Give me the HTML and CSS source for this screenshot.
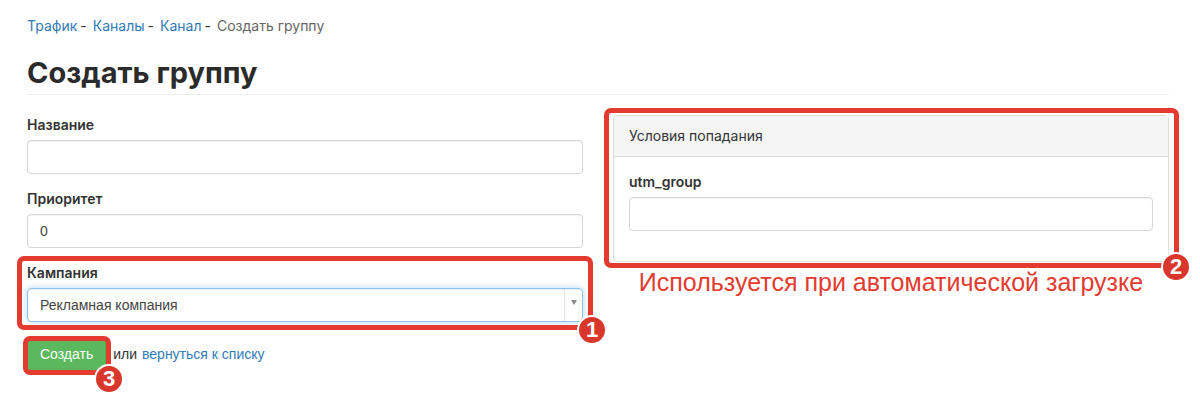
FILE: index.html
```html
<!DOCTYPE html>
<html lang="ru">
<head>
    <meta charset="UTF-8">
    <title>Создать группу</title>
    <link rel="stylesheet" href="styles.css">
</head>
<body>
    <div class="page">
        <div class="breadcrumb">
            <a href="#">Трафик</a><span class="sep">-</span><a href="#">Каналы</a><span class="sep">-</span><a href="#">Канал</a><span class="sep">-</span><span class="current">Создать группу</span>
        </div>

        <h1 class="page-header">Создать группу</h1>

        <div class="row">
            <!-- Left column: main fields -->
            <div class="col">
                <div class="form-group">
                    <label>Название</label>
                    <div class="form-control"></div>
                </div>
                <div class="form-group">
                    <label>Приоритет</label>
                    <div class="form-control">0</div>
                </div>
                <div class="form-group mark mark-1">
                    <label>Кампания</label>
                    <div class="form-control select">
                        <span class="select-value">Рекламная компания</span>
                        <span class="select-arrow"><span class="triangle"></span></span>
                    </div>
                    <span class="badge">1</span>
                </div>
                <div class="actions">
                    <span class="mark mark-3">
                        <button class="btn">Создать</button>
                        <span class="badge">3</span>
                    </span>
                    <span class="or">или</span>
                    <a href="#" class="back">вернуться к списку</a>
                </div>
            </div>

            <!-- Right column: conditions panel -->
            <div class="col">
                <div class="panel mark mark-2">
                    <div class="panel-heading">Условия попадания</div>
                    <div class="panel-body">
                        <div class="form-group">
                            <label>utm_group</label>
                            <div class="form-control"></div>
                        </div>
                    </div>
                    <span class="badge">2</span>
                    <div class="note">Используется при автоматической загрузке</div>
                </div>
            </div>
        </div>
    </div>
</body>
</html>
```

FILE: styles.css
```css
* {
    box-sizing: border-box;
}

html,
body {
    min-height: 100%;
}

body {
    margin: 0;
    font-family: Inter, "Noto Sans", sans-serif;
    font-size: 14px;
    color: #333;
    background: #fff;
}

a {
    color: #337ab7;
    text-decoration: none;
}

.page {
    min-height: 404px;
    padding: 16px 31px 0 27px;
}

/* Breadcrumb */
.breadcrumb {
    line-height: 20px;
    font-size: 14px;
}

.breadcrumb .sep {
    margin: 0 6px 0 3px;
    color: #333;
}

.breadcrumb .current {
    color: #666;
}

/* Title */
.page-header {
    margin: 19px 0 20px;
    padding-bottom: 3px;
    font-size: 29px;
    line-height: 36px;
    font-weight: 700;
    color: #2b2b2b;
    border-bottom: 1px solid #eee;
}

.row {
    display: grid;
    grid-template-columns: 1fr 1fr;
    gap: 30px;
}

/* Form */
.form-group {
    margin-bottom: 15px;
}

label {
    display: block;
    margin-bottom: 5px;
    line-height: 20px;
    font-weight: 600;
    color: #333;
}

.form-control {
    height: 34px;
    padding: 0 12px;
    border: 1px solid #d6d6d6;
    border-radius: 4px;
    box-shadow: inset 0 1px 1px rgba(0, 0, 0, 0.05);
    font-family: "Liberation Sans", Arial, sans-serif;
    font-size: 14px;
    line-height: 32px;
    color: #444;
}

.select {
    display: flex;
    padding-right: 0;
    border-color: #8fc2ec;
    box-shadow: inset 0 1px 1px rgba(0, 0, 0, 0.075), 0 0 6px rgba(102, 175, 233, 0.5);
}

.select-value {
    flex: 1;
}

.select-arrow {
    width: 18px;
    border-left: 1px solid #e4e4e4;
    display: flex;
    justify-content: center;
    padding-top: 11px;
}

.triangle {
    width: 0;
    height: 0;
    border-left: 3px solid transparent;
    border-right: 3px solid transparent;
    border-top: 5px solid #888;
}

/* Buttons */
.actions {
    display: flex;
    align-items: center;
    font-family: "Liberation Sans", Arial, sans-serif;
    font-size: 14px;
}

.btn {
    display: block;
    height: 34px;
    padding: 0 12px;
    border: 1px solid #4cae4c;
    border-radius: 4px;
    background: #5cb85c;
    color: #fff;
    font-family: "Liberation Sans", Arial, sans-serif;
    font-size: 14px;
}

.or {
    margin: 0 5px 0 7px;
    color: #333;
}

/* Panel */
.panel {
    border: 1px solid #ddd;
    border-radius: 4px;
}

.panel-heading {
    padding: 10px 15px;
    line-height: 20px;
    background: #f5f5f5;
    border-bottom: 1px solid #ddd;
    color: #333;
}

.panel-body {
    padding: 15px;
}

/* Annotation frames */
.mark {
    position: relative;
    display: block;
}

.mark::before {
    content: "";
    position: absolute;
    border: 5px solid #e33b30;
    border-radius: 7px;
    pointer-events: none;
}

.mark-1::before {
    top: -7px;
    left: -10px;
    right: -10px;
    bottom: -8px;
}

.mark-2::before {
    top: -8px;
    left: -10px;
    right: -11px;
    bottom: -7px;
}

.mark-3::before {
    top: -1px;
    left: -4px;
    right: -5px;
    bottom: -4px;
}

.badge {
    position: absolute;
    z-index: 1;
    width: 30px;
    height: 30px;
    border: 2px solid #fff;
    border-radius: 50%;
    background: #d9362c;
    color: #fff;
    font-family: "Liberation Sans", Arial, sans-serif;
    font-weight: 700;
    font-size: 22px;
    line-height: 26px;
    text-align: center;
}

.mark-1 .badge {
    right: -24px;
    bottom: -23px;
}

.mark-2 .badge {
    right: -23px;
    bottom: -21px;
}

.mark-3 .badge {
    right: -18px;
    bottom: -23px;
}

.note {
    position: absolute;
    top: calc(100% + 6px);
    left: 0;
    right: 0;
    text-align: center;
    font-family: "Liberation Sans", Arial, sans-serif;
    font-size: 25px;
    line-height: 30px;
    color: #e33b30;
}
```
